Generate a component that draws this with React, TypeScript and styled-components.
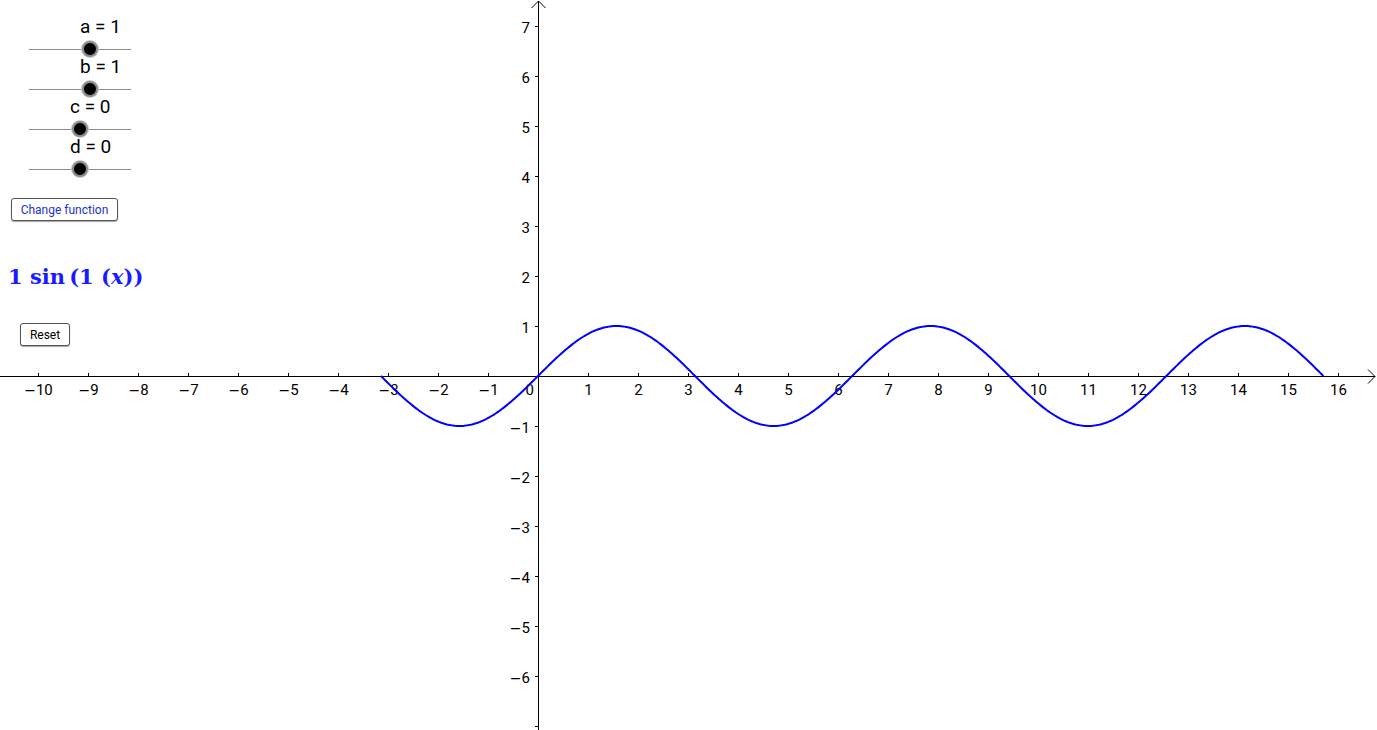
import React from "react";
import styled, { createGlobalStyle } from "styled-components";

const W = 1377;
const H = 730;
const OX = 538;
const OY = 376;
const UNIT = 50;

const GlobalStyle = createGlobalStyle`
  html, body {
    margin: 0;
    padding: 0;
    background: #ffffff;
    overflow: hidden;
  }
  body {
    font-family: Roboto, "Liberation Sans", sans-serif;
  }
`;

const Stage = styled.div`
  position: relative;
  width: ${W}px;
  height: ${H}px;
  background: #fff;
`;

const Graph = styled.svg`
  display: block;
  width: ${W}px;
  height: ${H}px;
`;

const Panel = styled.div`
  position: absolute;
  left: 0;
  top: 0;
  display: flex;
  flex-direction: column;
  align-items: flex-start;
  padding-top: 16px;
  width: 170px;
`;

const SliderBlock = styled.div`
  display: flex;
  flex-direction: column;
  height: 40px;
  width: 140px;
`;

const SliderLabel = styled.div`
  height: 22px;
  line-height: 22px;
  font-size: 19px;
  color: #000;
  white-space: nowrap;
`;

const Track = styled.div`
  position: relative;
  margin-top: 11px;
  margin-left: 29px;
  width: 102px;
  height: 1px;
  background: #8c8c8c;
`;

const Knob = styled.div`
  position: absolute;
  top: -8px;
  width: 12px;
  height: 12px;
  margin-left: -8px;
  border-radius: 50%;
  background: #000;
  border: 2px solid #8a8a8a;
  box-shadow: 0 0 0 1px #c8c8c8;
`;

const Button = styled.button<{ $blue?: boolean }>`
  font-family: Roboto, "Liberation Sans", sans-serif;
  font-size: 12px;
  color: ${(p) => (p.$blue ? "#2233cc" : "#000")};
  background: #fff;
  border: 1px solid #555;
  border-radius: 3px;
  box-shadow: 0 1px 1px rgba(0, 0, 0, 0.35);
  height: 23px;
  padding: 0;
  white-space: nowrap;
  cursor: pointer;
`;

const ChangeButton = styled(Button)`
  margin-top: 22px;
  margin-left: 11px;
  width: 107px;
`;

const ResetButton = styled(Button)`
  margin-top: 31px;
  margin-left: 20px;
  width: 50px;
`;

const Formula = styled.div`
  margin-top: 41px;
  margin-left: 8px;
  height: 30px;
  line-height: 30px;
  font-family: "DejaVu Serif", "Liberation Serif", serif;
  font-weight: bold;
  font-size: 21px;
  color: #1a1aff;
  white-space: nowrap;
  i {
    font-style: italic;
  }
`;

const sliders = [
  { name: "a", value: 1 },
  { name: "b", value: 1 },
  { name: "c", value: 0 },
  { name: "d", value: 0 },
];

const Slider = ({ name, value }: { name: string; value: number }) => {
  // track spans -5..5, 10px per unit
  const knobX = 51 + value * 10;
  return (
    <SliderBlock>
      <SliderLabel style={{ marginLeft: 29 + knobX - 10 }}>
        {name} = {value}
      </SliderLabel>
      <Track>
        <Knob style={{ left: knobX }} />
      </Track>
    </SliderBlock>
  );
};

const sinePath = () => {
  const pts: string[] = [];
  const start = -Math.PI;
  const end = 5 * Math.PI;
  const steps = 600;
  for (let i = 0; i <= steps; i++) {
    const x = start + ((end - start) * i) / steps;
    const px = OX + x * UNIT;
    const py = OY - Math.sin(x) * UNIT;
    pts.push(`${i === 0 ? "M" : "L"}${px.toFixed(2)},${py.toFixed(2)}`);
  }
  return pts.join(" ");
};

const tickFont = { fontFamily: "Roboto, 'Liberation Sans', sans-serif", fontSize: 15 };

const TickLabel = ({ n }: { n: number }) =>
  n < 0 ? (
    <>
      <tspan fontFamily="'DejaVu Sans', sans-serif" fontSize={14}>
        {"\u2212"}
      </tspan>
      {-n}
    </>
  ) : (
    <>{n}</>
  );

const Axes = () => {
  const xs: number[] = [];
  for (let i = -10; i <= 16; i++) if (i !== 0) xs.push(i);
  const ys: number[] = [];
  for (let i = -7; i <= 7; i++) if (i !== 0) ys.push(i);
  return (
    <g>
      <line x1={0} y1={OY + 0.5} x2={W - 2} y2={OY + 0.5} stroke="#000" strokeWidth={1} />
      <polyline
        points={`${W - 9},${OY - 6.5} ${W - 2},${OY + 0.5} ${W - 9},${OY + 7.5}`}
        fill="none"
        stroke="#000"
        strokeWidth={1}
      />
      <line x1={OX + 0.5} y1={1} x2={OX + 0.5} y2={H} stroke="#000" strokeWidth={1} />
      <polyline
        points={`${OX - 6.5},${8} ${OX + 0.5},${1} ${OX + 7.5},${8}`}
        fill="none"
        stroke="#000"
        strokeWidth={1}
      />
      {xs.map((i) => {
        const px = OX + i * UNIT + 0.5;
        return (
          <g key={`x${i}`}>
            <line x1={px} y1={OY - 3} x2={px} y2={OY + 0.5} stroke="#000" />
            <text x={px} y={OY + 19} textAnchor="middle" {...tickFont}>
              <TickLabel n={i} />
            </text>
          </g>
        );
      })}
      {ys.map((i) => {
        const py = OY - i * UNIT + 0.5;
        return (
          <g key={`y${i}`}>
            <line x1={OX - 3} y1={py} x2={OX + 0.5} y2={py} stroke="#000" />
            {i !== -7 && (
              <text x={OX - 8} y={py + 6} textAnchor="end" {...tickFont}>
                <TickLabel n={i} />
              </text>
            )}
          </g>
        );
      })}
      <text x={OX - 4} y={OY + 19} textAnchor="end" {...tickFont}>
        0
      </text>
    </g>
  );
};

export default function App() {
  return (
    <>
      <GlobalStyle />
      <Stage>
        <Graph viewBox={`0 0 ${W} ${H}`}>
          <Axes />
          <path d={sinePath()} fill="none" stroke="#0000ff" strokeWidth={2} />
        </Graph>
        <Panel>
          {sliders.map((s) => (
            <Slider key={s.name} name={s.name} value={s.value} />
          ))}
          <ChangeButton $blue>Change function</ChangeButton>
          <Formula>
            1&nbsp;sin&thinsp;(1&nbsp;(<i>x</i>))
          </Formula>
          <ResetButton>Reset</ResetButton>
        </Panel>
      </Stage>
    </>
  );
}
